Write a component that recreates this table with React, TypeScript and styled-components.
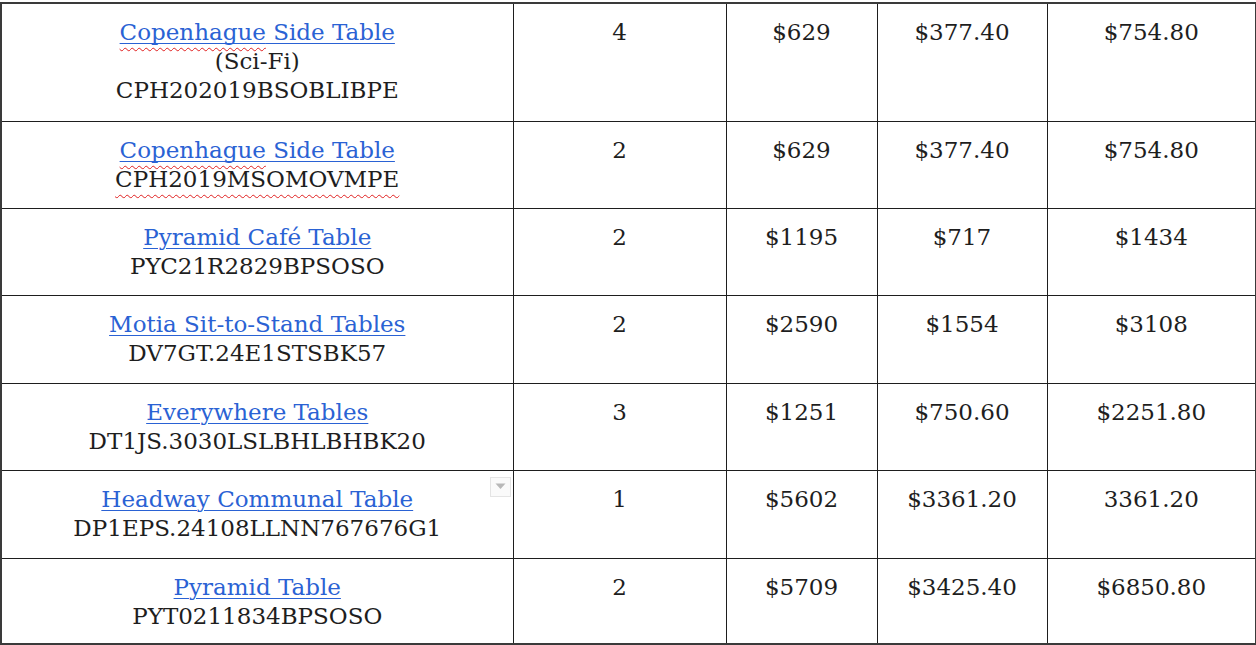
import React from "react";
import styled, { createGlobalStyle } from "styled-components";

const GlobalStyle = createGlobalStyle`
  html, body {
    margin: 0;
    padding: 0;
    background: #ffffff;
  }
`;

const Page = styled.div`
  padding-top: 2px;
  width: 1256px;
  height: 645px;
  overflow: hidden;
  box-sizing: border-box;
`;

const Table = styled.table`
  border-collapse: collapse;
  table-layout: fixed;
  width: 1255px;
  font-family: "DejaVu Serif", "Liberation Serif", serif;
  font-size: 23px;
  color: #1e1e1e;
  border: 2px solid #3a3a3a;
`;

const Col = styled.col<{ $w: number }>`
  width: ${(p) => p.$w}px;
`;

const Row = styled.tr<{ $h: number }>`
  height: ${(p) => p.$h}px;
`;

const Cell = styled.td`
  position: relative;
  border: 1px solid #1e1e1e;
  padding: 14px 4px 0;
  vertical-align: top;
  text-align: center;
  line-height: 29px;
  white-space: nowrap;
`;

const Line = styled.div`
  line-height: 29px;
`;

const ProductLink = styled.a`
  color: #2a62d4;
  text-decoration: underline;
  text-decoration-color: #2a62d4;
  text-decoration-thickness: 1px;
  text-underline-offset: 3px;
`;

const Misspelled = styled.span`
  text-decoration: underline wavy #e02020;
  text-decoration-thickness: 1px;
  text-underline-offset: 7px;
  text-decoration-skip-ink: none;
`;

const DropButton = styled.div`
  position: absolute;
  top: 6px;
  right: 2px;
  width: 21px;
  height: 20px;
  box-sizing: border-box;
  border: 1px solid #e4e4e4;
  background: #fafafa;
  display: flex;
  align-items: center;
  justify-content: center;
`;

type Item = {
  name: React.ReactNode;
  lines: React.ReactNode[];
  qty: string;
  price: string;
  unit: string;
  total: string;
  dropdown?: boolean;
  h: number;
};

const items: Item[] = [
  {
    name: (
      <>
        <Misspelled>Copenhague</Misspelled> Side Table
      </>
    ),
    lines: ["(Sci-Fi)", "CPH202019BSOBLIBPE"],
    qty: "4",
    price: "$629",
    unit: "$377.40",
    total: "$754.80",
    h: 118,
  },
  {
    name: (
      <>
        <Misspelled>Copenhague</Misspelled> Side Table
      </>
    ),
    lines: [<Misspelled key="c">CPH2019MSOMOVMPE</Misspelled>],
    qty: "2",
    price: "$629",
    unit: "$377.40",
    total: "$754.80",
    h: 87,
  },
  {
    name: "Pyramid Café Table",
    lines: ["PYC21R2829BPSOSO"],
    qty: "2",
    price: "$1195",
    unit: "$717",
    total: "$1434",
    h: 87,
  },
  {
    name: "Motia Sit-to-Stand Tables",
    lines: ["DV7GT.24E1STSBK57"],
    qty: "2",
    price: "$2590",
    unit: "$1554",
    total: "$3108",
    h: 88,
  },
  {
    name: "Everywhere Tables",
    lines: ["DT1JS.3030LSLBHLBHBK20"],
    qty: "3",
    price: "$1251",
    unit: "$750.60",
    total: "$2251.80",
    h: 87,
  },
  {
    name: "Headway Communal Table",
    lines: ["DP1EPS.24108LLNN767676G1"],
    qty: "1",
    price: "$5602",
    unit: "$3361.20",
    total: "3361.20",
    dropdown: true,
    h: 88,
  },
  {
    name: "Pyramid Table",
    lines: ["PYT0211834BPSOSO"],
    qty: "2",
    price: "$5709",
    unit: "$3425.40",
    total: "$6850.80",
    h: 86,
  },
];

function App() {
  return (
    <Page>
      <GlobalStyle />
      <Table>
        <colgroup>
          <Col $w={512} />
          <Col $w={213} />
          <Col $w={151} />
          <Col $w={170} />
          <Col $w={209} />
        </colgroup>
        <tbody>
          {items.map((it, i) => (
            <Row key={i} $h={it.h}>
              <Cell>
                <Line>
                  <ProductLink href="#">{it.name}</ProductLink>
                </Line>
                {it.lines.map((l, j) => (
                  <Line key={j}>{l}</Line>
                ))}
                {it.dropdown && (
                  <DropButton>
                    <svg width="11" height="7" viewBox="0 0 11 7">
                      <path d="M0.5 0.5 L10.5 0.5 L5.5 6 Z" fill="#b8b8b8" />
                    </svg>
                  </DropButton>
                )}
              </Cell>
              <Cell>{it.qty}</Cell>
              <Cell>{it.price}</Cell>
              <Cell>{it.unit}</Cell>
              <Cell>{it.total}</Cell>
            </Row>
          ))}
        </tbody>
      </Table>
    </Page>
  );
}

export default App;
